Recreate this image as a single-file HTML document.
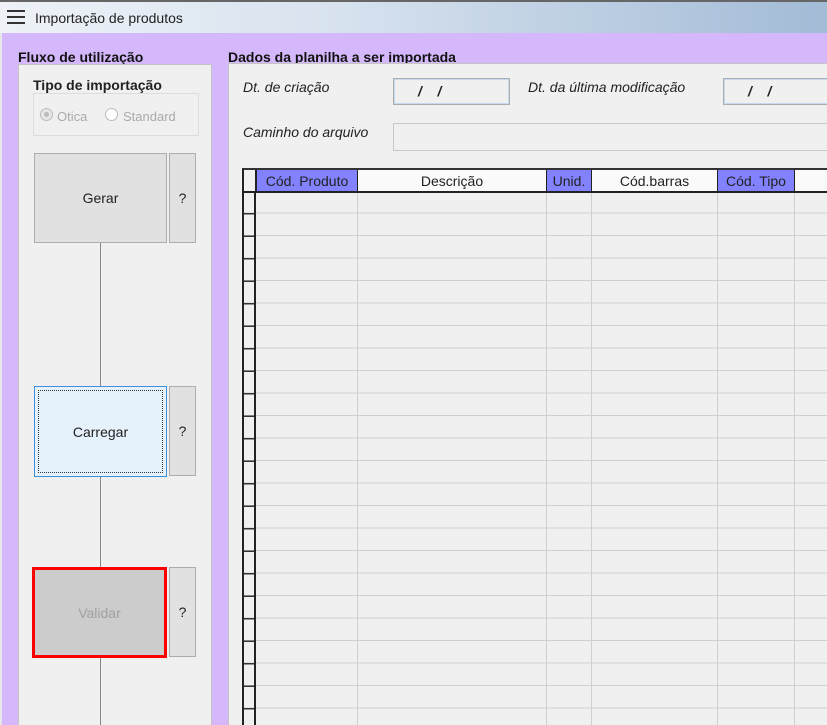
<!DOCTYPE html>
<html><head><meta charset="utf-8"><style>
*{margin:0;padding:0;box-sizing:border-box}
html,body{width:827px;height:725px;overflow:hidden}
body{background:#d5b8fc;font-family:"Liberation Sans",Arial,sans-serif;font-size:14px;color:#222;position:relative}
.a{position:absolute}
.title{left:0;top:0;width:827px;height:33px;border-top:2px solid #666;background:linear-gradient(to right,#eef2f7 0%,#d8e3ef 40%,#a3bbd6 100%)}
.panel{background:#f0f0f0;border:1px solid #c4c4c4}
.btn{background:#e1e1e1;border:1px solid #adadad;display:flex;align-items:center;justify-content:center;font-size:14px}
.lbl{font-style:italic;font-size:14px}
.inp{background:#f0f0f0;border:1px solid #adadad;box-shadow:inset 0 0 0 1px #c5daf0}
.hc{position:absolute;top:0;height:22px;display:flex;align-items:center;justify-content:center;font-size:14px;border-right:1px solid #222}
.p{background:#8282ff}
</style></head><body>
<div class="a" style="left:0;top:33px;width:2px;height:692px;background:#e8e8e8"></div>
<div class="a title">
  <div class="a" style="left:7px;top:8px;width:18px;height:2px;background:#333"></div>
  <div class="a" style="left:7px;top:14px;width:18px;height:2px;background:#333"></div>
  <div class="a" style="left:7px;top:20px;width:18px;height:2px;background:#333"></div>
  <div class="a" style="left:35px;top:8px;font-size:14px;color:#222">Importação de produtos</div>
</div>
<div class="a" style="left:18px;top:49px;font-weight:bold;font-size:14px;color:#111">Fluxo de utilização</div>
<div class="a" style="left:228px;top:49px;font-weight:bold;font-size:14px;color:#111">Dados da planilha a ser importada</div>
<div class="a panel" style="left:18px;top:64px;width:194px;height:670px"></div>
<div class="a" style="left:33px;top:77px;font-weight:bold;font-size:14px">Tipo de importação</div>
<div class="a" style="left:33px;top:93px;width:166px;height:43px;border:1px solid #dcdcdc"></div>
<div class="a" style="left:40px;top:108px;width:13px;height:13px;border-radius:50%;border:1px solid #bbb;background:#e6e6e6"><div class="a" style="left:3px;top:3px;width:5px;height:5px;border-radius:50%;background:#bbb"></div></div>
<div class="a" style="left:57px;top:109px;font-size:13px;color:#aaa">Otica</div>
<div class="a" style="left:105px;top:108px;width:13px;height:13px;border-radius:50%;border:1px solid #bbb;background:#fff"></div>
<div class="a" style="left:123px;top:109px;font-size:13px;color:#aaa">Standard</div>
<div class="a" style="left:100px;top:242px;width:1px;height:490px;background:#888"></div>
<div class="a btn" style="left:34px;top:153px;width:133px;height:90px">Gerar</div>
<div class="a btn" style="left:169px;top:153px;width:27px;height:90px">?</div>
<div class="a btn" style="left:34px;top:386px;width:133px;height:91px;background:#e5f1fb;border-color:#3c8fd8"><div class="a" style="left:3px;top:3px;right:3px;bottom:3px;border:1px dotted #333"></div>Carregar</div>
<div class="a btn" style="left:169px;top:386px;width:27px;height:90px">?</div>
<div class="a btn" style="left:32px;top:567px;width:135px;height:91px;background:#cccccc;border:3px solid #f00;color:#a0a0a0">Validar</div>
<div class="a btn" style="left:169px;top:567px;width:27px;height:90px">?</div>

<div class="a panel" style="left:228px;top:63px;width:610px;height:680px"></div>
<div class="a lbl" style="left:243px;top:79px">Dt. de criação</div>
<div class="a inp" style="left:393px;top:78px;width:117px;height:27px"><span class="a" style="left:24px;top:4px;font-weight:bold;font-style:italic">/&nbsp;&nbsp;&nbsp;&nbsp;/</span></div>
<div class="a lbl" style="left:528px;top:79px">Dt. da última modificação</div>
<div class="a inp" style="left:723px;top:78px;width:117px;height:27px"><span class="a" style="left:24px;top:4px;font-weight:bold;font-style:italic">/&nbsp;&nbsp;&nbsp;&nbsp;/</span></div>
<div class="a lbl" style="left:243px;top:124px">Caminho do arquivo</div>
<div class="a" style="left:393px;top:123px;width:450px;height:28px;border:1px solid #c8c8c8;background:#f0f0f0"></div>

<div class="a" style="left:242px;top:168px;width:600px;height:560px;border-left:2px solid #222;border-top:2px solid #333;background:#f0f0f0 repeating-linear-gradient(to bottom,transparent 0,transparent 21.5px,#d0d0d0 21.5px,#d0d0d0 22.5px);background-position:0 21px">
  <div class="a" style="left:0;top:0;width:600px;height:21px;background:#fafafa">
    <div class="hc" style="left:0;width:13px;border-right:2px solid #222;background:#f0f0f0"></div>
    <div class="hc p" style="left:13px;width:101px">Cód. Produto</div>
    <div class="hc" style="left:114px;width:189px">Descrição</div>
    <div class="hc p" style="left:303px;width:45px">Unid.</div>
    <div class="hc" style="left:348px;width:126px">Cód.barras</div>
    <div class="hc p" style="left:474px;width:77px">Cód. Tipo</div>
  </div>
  <div class="a" style="left:0;top:21px;width:600px;height:2px;background:#222"></div>
  <div class="a" style="left:0;top:22px;width:12px;height:540px;border-right:2px solid #222;background:repeating-linear-gradient(to bottom,transparent 0,transparent 21px,#333 21px,#333 22.5px)"></div>
  <div class="a" style="left:113px;top:23px;width:1px;height:540px;background:#d0d0d0"></div>
  <div class="a" style="left:302px;top:23px;width:1px;height:540px;background:#d0d0d0"></div>
  <div class="a" style="left:347px;top:23px;width:1px;height:540px;background:#d0d0d0"></div>
  <div class="a" style="left:473px;top:23px;width:1px;height:540px;background:#d0d0d0"></div>
  <div class="a" style="left:550px;top:23px;width:1px;height:540px;background:#d0d0d0"></div>
</div>
</body></html>
